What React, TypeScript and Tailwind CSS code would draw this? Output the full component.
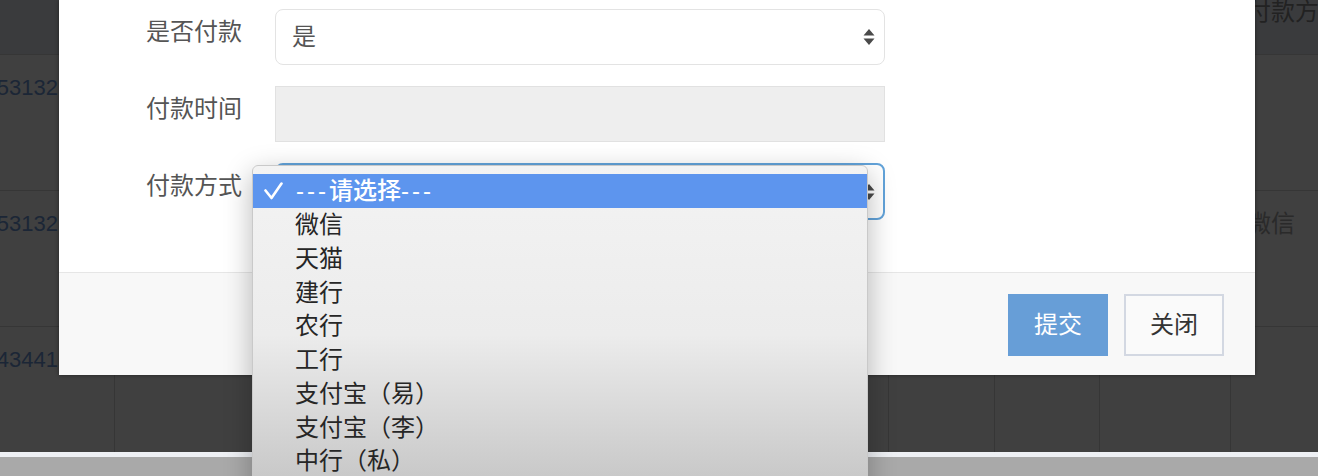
import React from "react";

const Arrows = ({ className = "" }: { className?: string }) => (
  <svg width="12" height="16" viewBox="0 0 12 16" className={className}>
    <path d="M6 0 L11.5 6.5 L0.5 6.5 Z" fill="#4a4a4a" />
    <path d="M6 16 L11.5 9.5 L0.5 9.5 Z" fill="#4a4a4a" />
  </svg>
);

const items = ["微信", "天猫", "建行", "农行", "工行", "支付宝（易）", "支付宝（李）", "中行（私）", "其他"];

const Num = ({ t }: { t: string }) => (
  <div className="w-[58px] flex justify-end pt-[17px] text-[22px] leading-[32px] text-[#1b2636] whitespace-nowrap">
    <span>{t}</span>
  </div>
);

export default function App() {
  return (
    <div className="relative w-[1318px] h-[476px] overflow-hidden bg-[#404040] font-['Liberation_Sans','Noto_Sans_CJK_SC',sans-serif]">
      {/* background table */}
      <div className="flex flex-col">
        <div className="h-[55px] bg-[#3a3b3d] border-b border-[#363636] flex">
          <div className="flex-1" />
          <div className="w-[71px] text-[24px] leading-[24px] text-[#222] whitespace-nowrap -ml-[8px]">付款方式</div>
        </div>
        <div className="h-[136px] border-b border-[#363636] flex">
          <Num t="53132" />
          <div className="flex-1" />
        </div>
        <div className="h-[136px] border-b border-[#363636] flex">
          <Num t="53132" />
          <div className="flex-1" />
          <div className="w-[71px] pt-[16px] text-[24px] leading-[34px] text-[#2a2a2a] whitespace-nowrap -ml-[8px]">微信</div>
        </div>
        <div className="h-[125px] flex">
          <div className="w-[115px] border-r border-[#363636]">
            <Num t="43441" />
          </div>
          <div className="w-[774px] border-r border-[#363636]" />
          <div className="w-[106px] border-r border-[#363636]" />
          <div className="w-[105px] border-r border-[#363636]" />
          <div className="w-[131px] border-r border-[#363636]" />
          <div className="flex-1" />
        </div>
        <div className="h-[5px] bg-[#eef0f4]" />
        <div className="h-[19px] bg-[#a9a9a9]" />
      </div>

      {/* modal */}
      <div className="absolute left-[59px] top-0 w-[1196px] bg-white shadow-[0_0_4px_rgba(0,0,0,0.45)]">
        <div className="h-[272px] pt-[9px] flex flex-col gap-[21px]">
          <div className="flex">
            <div className="w-[183px] text-right pt-[6px] text-[24px] leading-[34px] text-[#555]">是否付款</div>
            <div className="ml-[33px] w-[610px] h-[56px] rounded-[8px] border border-[#e3e3e3] flex items-center pl-[16px] pr-[9px]">
              <span className="flex-1 text-[24px] text-[#555]">是</span>
              <Arrows />
            </div>
          </div>
          <div className="flex">
            <div className="w-[183px] text-right pt-[6px] text-[24px] leading-[34px] text-[#555]">付款时间</div>
            <div className="ml-[33px] w-[610px] h-[56px] border border-[#e1e1e1] bg-[#eeeeee]" />
          </div>
          <div className="flex">
            <div className="w-[183px] text-right pt-[6px] text-[24px] leading-[34px] text-[#555]">付款方式</div>
            <div className="ml-[33px] w-[610px] h-[57px] rounded-[8px] border-2 border-[#62a3da] flex items-center justify-end pr-[8px]">
              <Arrows />
            </div>
          </div>
        </div>
        <div className="h-[103px] border-t border-[#e6e6e6] bg-[#f8f8f8] flex justify-end items-start pt-[21px] pr-[31px] gap-[16px]">
          <button className="w-[100px] h-[62px] bg-[#679ed7] text-white text-[24px]">提交</button>
          <button className="w-[100px] h-[62px] bg-[#fafafa] border-2 border-[#d3d8e2] text-[#333] text-[24px]">关闭</button>
        </div>
      </div>

      {/* native dropdown */}
      <div className="absolute left-[252px] top-[165px] w-[616px] h-[340px] rounded-[6px] border border-[#c9c9c9] bg-gradient-to-b from-[#f3f3f3] via-[#ececec] to-[#c2c2c2] shadow-[0_8px_28px_rgba(0,0,0,0.28)] pt-[8px] overflow-hidden">
        <div className="h-[34px] bg-[#5d95ee] flex items-center text-white text-[24px] font-medium">
          <svg width="20" height="18" viewBox="0 0 20 18" className="ml-[11px] mr-[12px]">
            <path d="M1.5 8.5 L7.5 16 L17.5 1.5" stroke="white" strokeWidth="2.6" fill="none" strokeLinecap="round" strokeLinejoin="round" />
          </svg>
          <span><span className="tracking-[3px]">---</span>请选择<span className="tracking-[3px]">---</span></span>
        </div>
        {items.map((t) => (
          <div key={t} className="h-[33.75px] leading-[33.75px] pl-[42px] text-[24px] text-[#262626]">
            {t}
          </div>
        ))}
      </div>
    </div>
  );
}
